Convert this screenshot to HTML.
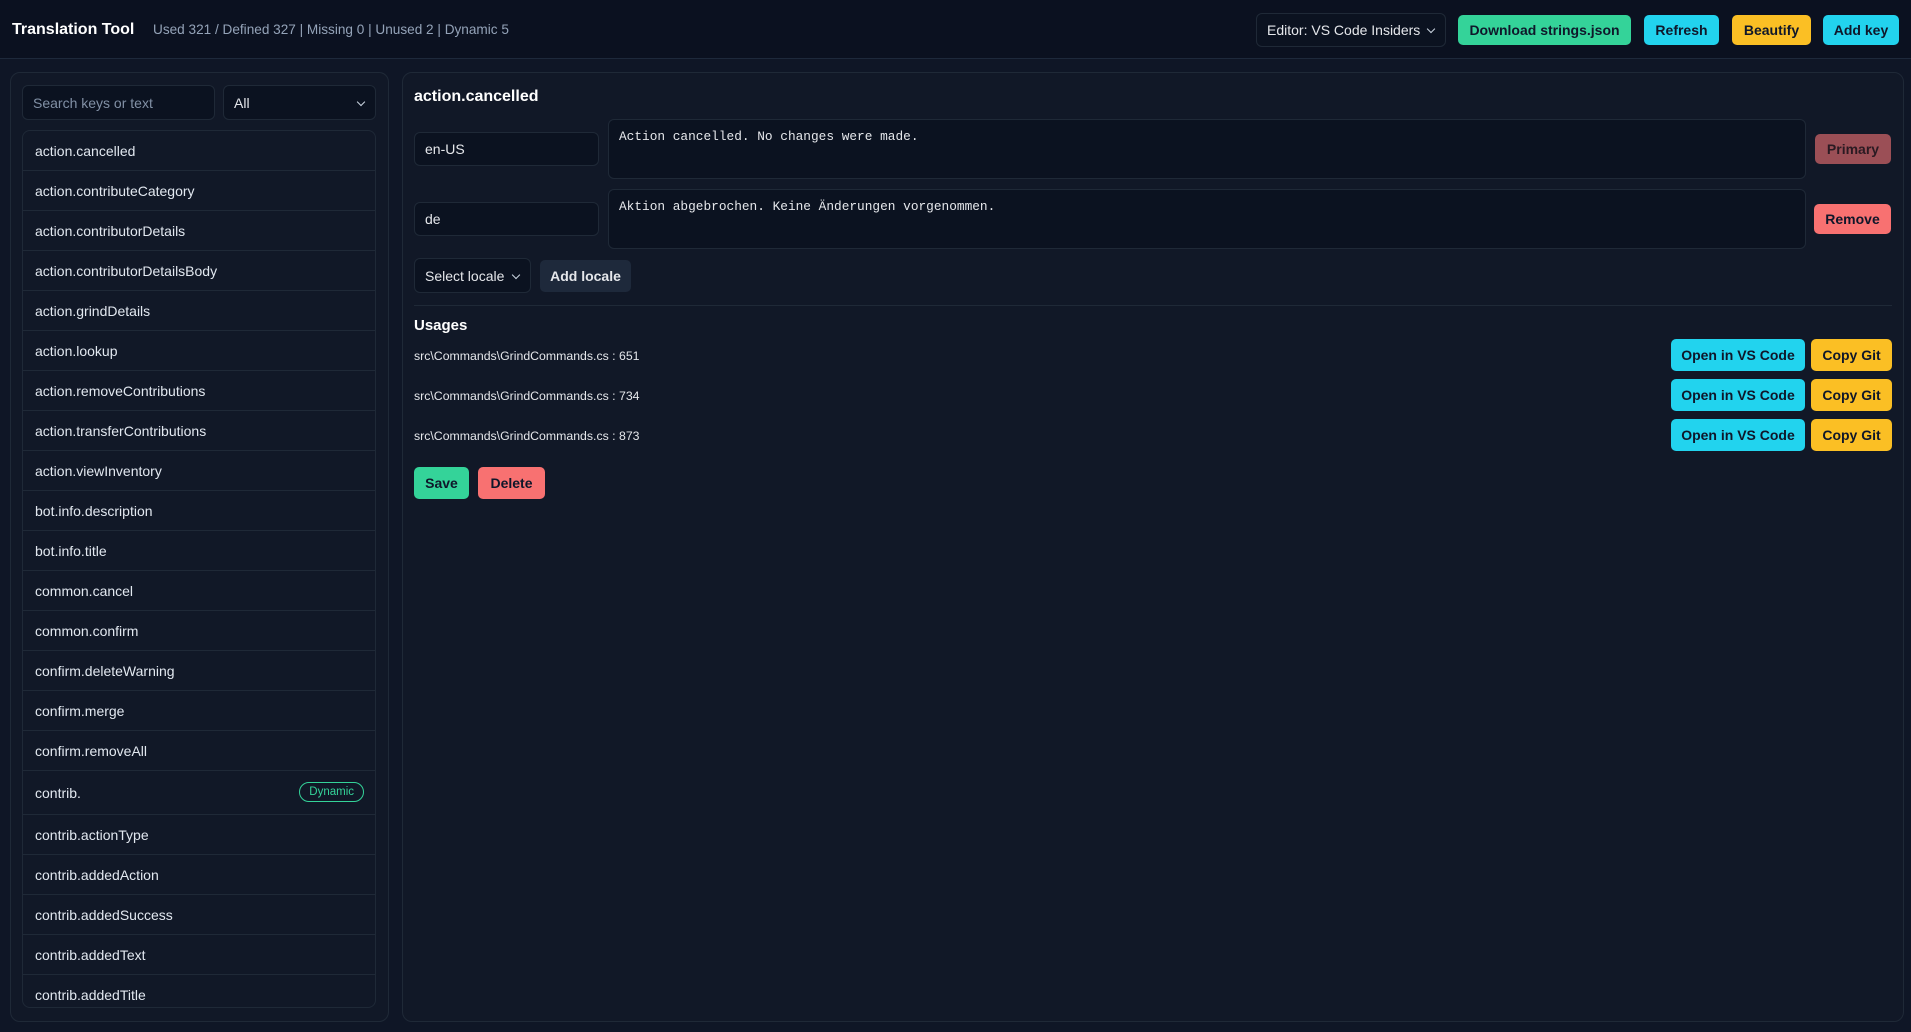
<!DOCTYPE html>
<html><head><meta charset="utf-8"><style>
*{box-sizing:border-box;margin:0;padding:0}
body{width:1911px;height:1032px;background:#0f1626;font-family:"Liberation Sans",sans-serif;color:#e5e7eb;position:relative;overflow:hidden}
.a{position:absolute}
.hdr{left:0;top:0;width:1911px;height:59px;background:#0b1120;border-bottom:1px solid #1e293b}
.btn{position:absolute;border-radius:5px;font-weight:bold;font-size:14px;color:#0f172a;display:flex;align-items:center;justify-content:center}
.g{background:#34d399}.c{background:#22d3ee}.y{background:#fbbf24}.r{background:#f87171}
.inp{position:absolute;background:#0b1220;border:1px solid #1f2937;border-radius:6px;font-size:14px;display:flex;align-items:center;padding-left:10px;color:#e5e7eb}
.panel{position:absolute;background:#111827;border:1px solid #1f2937;border-radius:10px}
.list{left:22px;top:130px;width:354px;height:878px;border:1px solid #1f2937;border-radius:8px;overflow:hidden;background:#111827}
.row{height:40px;border-bottom:1px solid #1f2937;display:flex;align-items:center;padding-left:12px;font-size:14px;color:#e2e8f0;position:relative}
.ta{position:absolute;background:#0b1220;border:1px solid #1f2937;border-radius:6px;font-family:"Liberation Mono",monospace;font-size:12.8px;padding:9px 10px;color:#e5e7eb}
.chev{position:absolute;right:11px;top:50%;margin-top:-4px;width:6px;height:6px;border-right:1.3px solid #cbd5e1;border-bottom:1.3px solid #cbd5e1;transform:rotate(45deg)}
.use{position:absolute;left:414px;font-size:12.3px;color:#e5e7eb}
</style></head><body>
<div class="a hdr"></div>
<div class="a" style="left:12px;top:21px;font-size:16px;font-weight:bold;color:#fff">Translation Tool</div>
<div class="a" style="left:153px;top:22px;font-size:13.6px;color:#94a3b8">Used 321 / Defined 327 | Missing 0 | Unused 2 | Dynamic 5</div>
<div class="inp" style="left:1256px;top:13px;width:190px;height:34px;font-size:14px">Editor: VS Code Insiders<span class="chev"></span></div>
<div class="btn g" style="left:1458px;top:15px;width:173px;height:30px">Download strings.json</div>
<div class="btn c" style="left:1644px;top:15px;width:75px;height:30px">Refresh</div>
<div class="btn y" style="left:1732px;top:15px;width:79px;height:30px">Beautify</div>
<div class="btn c" style="left:1823px;top:15px;width:76px;height:30px">Add key</div>

<div class="panel" style="left:10px;top:72px;width:379px;height:950px"></div>
<div class="inp" style="left:22px;top:85px;width:193px;height:35px;color:#8190a5">Search keys or text</div>
<div class="inp" style="left:223px;top:85px;width:153px;height:35px">All<span class="chev"></span></div>
<div class="a list">
<div class="row">action.cancelled</div>
<div class="row">action.contributeCategory</div>
<div class="row">action.contributorDetails</div>
<div class="row">action.contributorDetailsBody</div>
<div class="row">action.grindDetails</div>
<div class="row">action.lookup</div>
<div class="row">action.removeContributions</div>
<div class="row">action.transferContributions</div>
<div class="row">action.viewInventory</div>
<div class="row">bot.info.description</div>
<div class="row">bot.info.title</div>
<div class="row">common.cancel</div>
<div class="row">common.confirm</div>
<div class="row">confirm.deleteWarning</div>
<div class="row">confirm.merge</div>
<div class="row">confirm.removeAll</div>
<div class="row" style="height:44px">contrib.<span style="position:absolute;right:11px;top:11px;border:1px solid #34d399;color:#34d399;border-radius:12px;font-size:11.5px;padding:3px 9px">Dynamic</span></div>
<div class="row">contrib.actionType</div>
<div class="row">contrib.addedAction</div>
<div class="row">contrib.addedSuccess</div>
<div class="row">contrib.addedText</div>
<div class="row">contrib.addedTitle</div>
</div>

<div class="panel" style="left:402px;top:72px;width:1502px;height:950px"></div>
<div class="a" style="left:414px;top:88px;font-size:16px;font-weight:bold;color:#fff">action.cancelled</div>
<div class="inp" style="left:414px;top:132px;width:185px;height:34px">en-US</div>
<div class="ta" style="left:608px;top:119px;width:1198px;height:60px">Action cancelled. No changes were made.</div>
<div class="btn" style="left:1815px;top:134px;width:76px;height:30px;background:#9b4f56;color:#2a1a22">Primary</div>
<div class="inp" style="left:414px;top:202px;width:185px;height:34px">de</div>
<div class="ta" style="left:608px;top:189px;width:1198px;height:60px">Aktion abgebrochen. Keine Änderungen vorgenommen.</div>
<div class="btn r" style="left:1814px;top:204px;width:77px;height:30px">Remove</div>
<div class="inp" style="left:414px;top:258px;width:117px;height:35px">Select locale<span class="chev"></span></div>
<div class="btn" style="left:540px;top:260px;width:91px;height:32px;background:#1e293b;color:#e5e7eb">Add locale</div>
<div class="a" style="left:414px;top:305px;width:1478px;height:1px;background:#1f2937"></div>
<div class="a" style="left:414px;top:317px;font-size:15px;font-weight:bold;color:#fff">Usages</div>
<div class="use" style="top:349px">src\Commands\GrindCommands.cs : 651</div>
<div class="use" style="top:389px">src\Commands\GrindCommands.cs : 734</div>
<div class="use" style="top:429px">src\Commands\GrindCommands.cs : 873</div>
<div class="btn c" style="left:1671px;top:339px;width:134px;height:32px">Open in VS Code</div>
<div class="btn y" style="left:1811px;top:339px;width:81px;height:32px">Copy Git</div>
<div class="btn c" style="left:1671px;top:379px;width:134px;height:32px">Open in VS Code</div>
<div class="btn y" style="left:1811px;top:379px;width:81px;height:32px">Copy Git</div>
<div class="btn c" style="left:1671px;top:419px;width:134px;height:32px">Open in VS Code</div>
<div class="btn y" style="left:1811px;top:419px;width:81px;height:32px">Copy Git</div>
<div class="btn g" style="left:414px;top:467px;width:55px;height:32px">Save</div>
<div class="btn r" style="left:478px;top:467px;width:67px;height:32px">Delete</div>
</body></html>
